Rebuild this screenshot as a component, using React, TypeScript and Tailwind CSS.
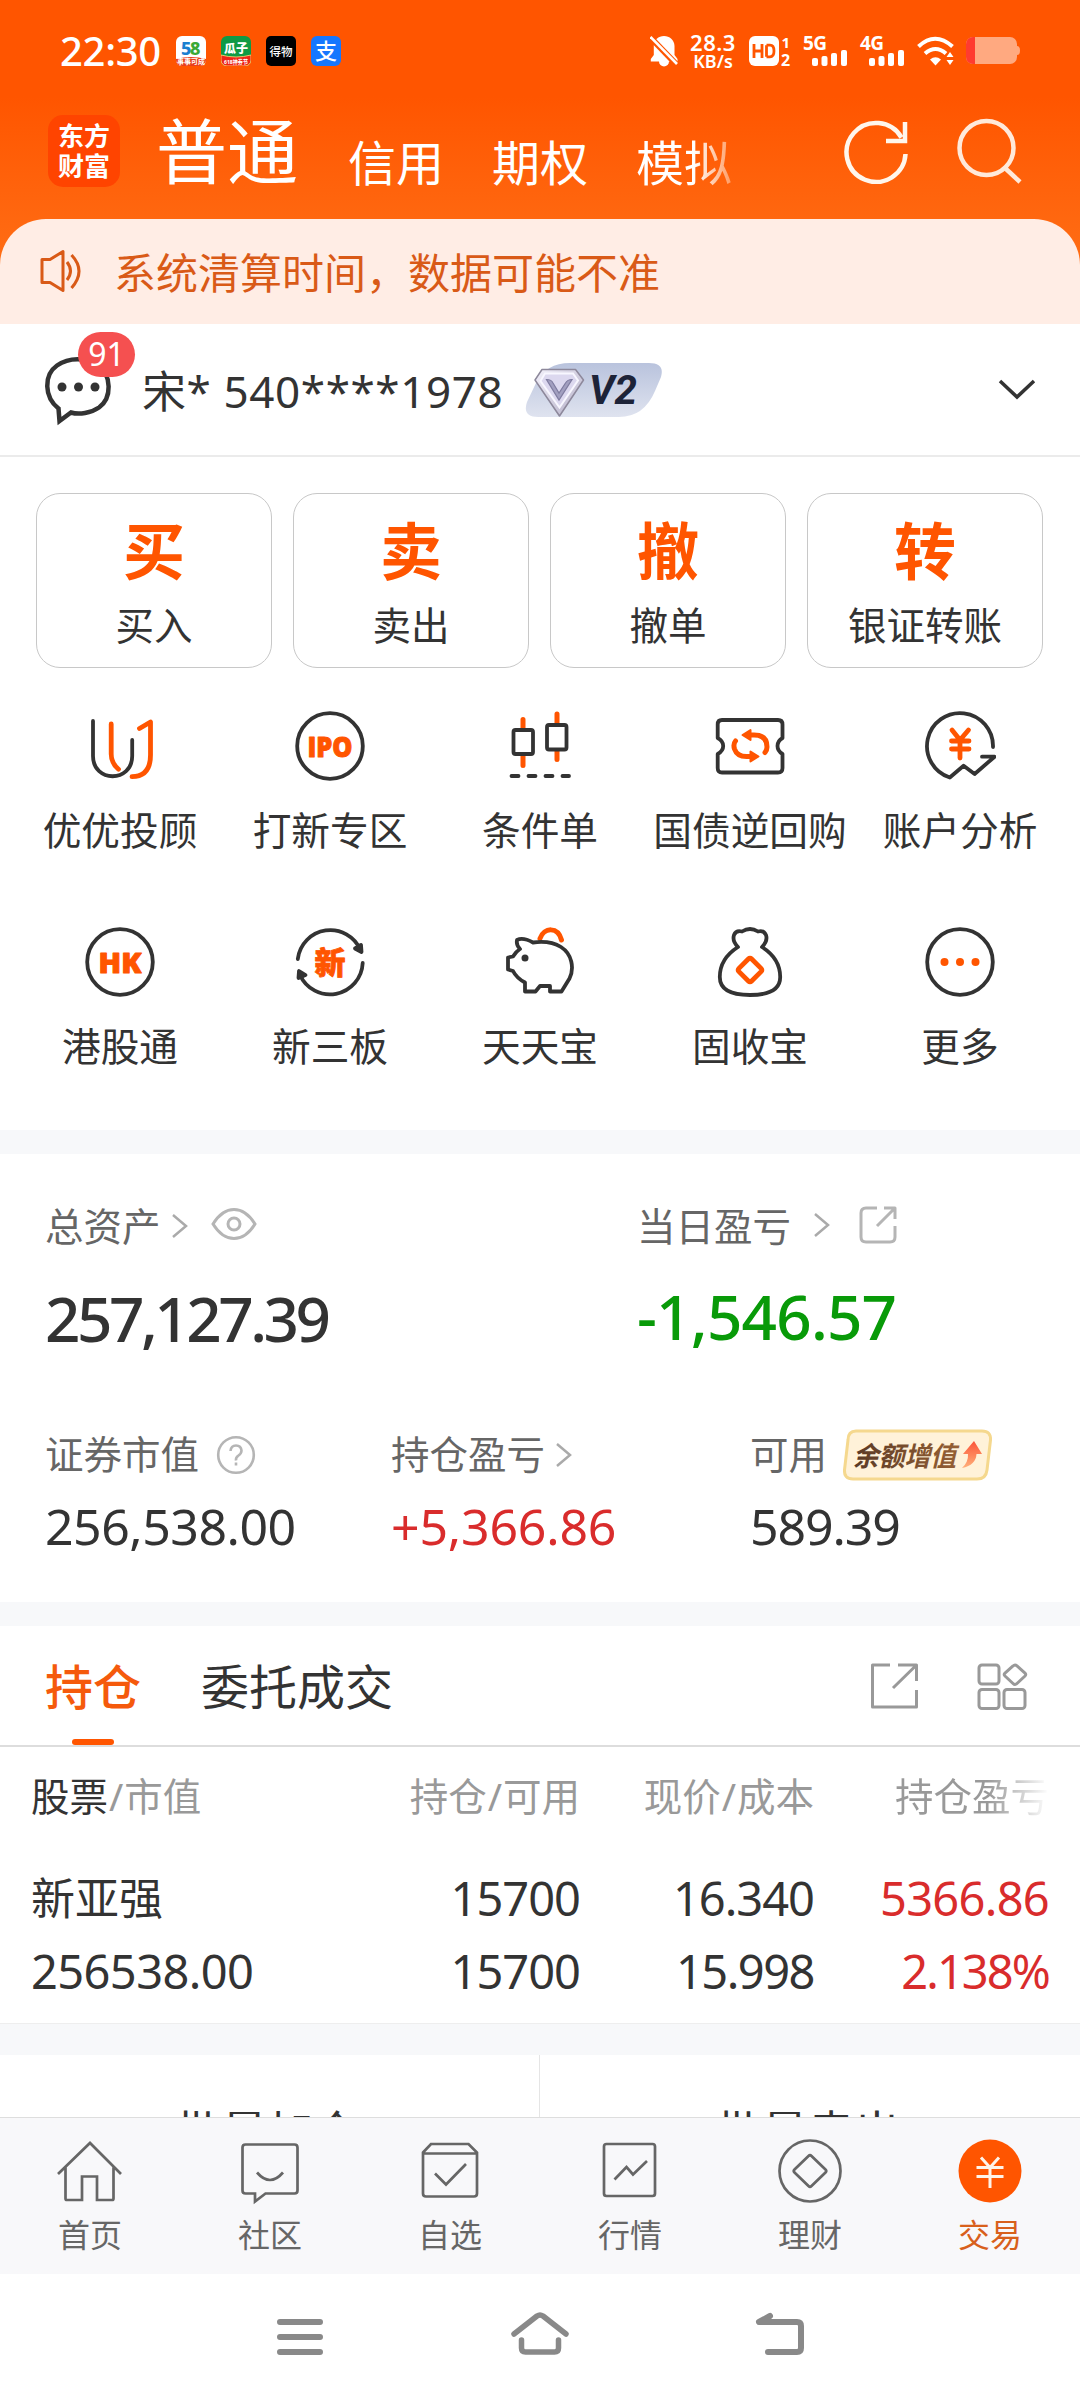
import type { ReactNode } from "react"

const DARK = "#333333"
const ORANGE = "#ff5500"

/* ---------- status bar ---------- */

function SignalBars() {
  return (
    <svg width="36" height="16" viewBox="0 0 36 16" fill="#fff">
      <rect x="0" y="8" width="6" height="8" rx="2" />
      <rect x="9.5" y="6" width="6" height="10" rx="2" />
      <rect x="19" y="3" width="6" height="13" rx="2" />
      <rect x="29" y="0" width="6" height="16" rx="2" />
    </svg>
  )
}

function StatusBar() {
  return (
    <div className="flex h-[102px] items-center pl-[60px] pr-[60px] text-white">
      <span className="w-[116px] text-[40px] font-medium tracking-[-0.3px] leading-[40px]">22:30</span>
      <div className="flex gap-[15px]">
        {/* 58 */}
        <svg width="30" height="30" viewBox="0 0 30 30">
          <rect width="30" height="30" rx="6" fill="#fff" />
          <path d="M0 23q15-4 30 0v1a6 6 0 0 1-6 6H6a6 6 0 0 1-6-6z" fill="#e8401c" />
          <text x="5" y="19" fontSize="18" fontWeight="800" fill="#1a7fd0">5</text>
          <text x="14" y="19" fontSize="18" fontWeight="800" fill="#3aa935">8</text>
          <text x="15" y="28" fontSize="7" fontWeight="700" textAnchor="middle" fill="#fff">事事可成</text>
        </svg>
        <svg width="30" height="30" viewBox="0 0 30 30">
          <rect width="30" height="30" rx="6" fill="#0f9a45" />
          <path d="M0 19q15 4 30 0v5a6 6 0 0 1-6 6H6a6 6 0 0 1-6-6z" fill="#ee2418" stroke="#ffe27a" strokeWidth="0.8" />
          <text x="15" y="17" fontSize="12" fontWeight="800" textAnchor="middle" fill="#fff">瓜子</text>
          <text x="15" y="28" fontSize="6" fontWeight="700" textAnchor="middle" fill="#fff" textLength="24" lengthAdjust="spacingAndGlyphs">618神券节</text>
        </svg>
        <svg width="30" height="30" viewBox="0 0 30 30">
          <rect width="30" height="30" rx="5" fill="#000" />
          <text x="15" y="19.5" fontSize="11.5" fontWeight="500" textAnchor="middle" fill="#fff">得物</text>
        </svg>
        <svg width="30" height="30" viewBox="0 0 30 30">
          <rect width="30" height="30" rx="6" fill="#1677ff" />
          <text x="15" y="23" fontSize="22" fontWeight="500" textAnchor="middle" fill="#fff">支</text>
        </svg>
      </div>

      <div className="ml-auto flex items-center">
        <svg width="28" height="32" viewBox="0 0 28 32">
          <path d="M14 1c5.500 0 10.500 4 10.500 10v9l3 4v2.500H19a5 5 0 0 1-10 0H.8V24l3-4v-9C3.800 5 8.500 1 14 1z" fill="#fff" />
          <path d="M-1 1L27 30" stroke={ORANGE} strokeWidth="6" />
          <path d="M0.500 2L27 29" stroke="#fff" strokeWidth="2.600" />
        </svg>
        <div className="ml-3 flex w-[46px] flex-col items-center font-semibold">
          <span className="text-[22px] leading-[20px] tracking-[0.5px]">28.3</span>
          <span className="text-[18px] leading-[18px]">KB/s</span>
        </div>
        <svg className="ml-[13px]" width="44" height="32" viewBox="0 0 44 32" fill="#fff">
          <rect x="0" y="1" width="30" height="30" rx="6" />
          <path d="M5 9v14M13 9v14M5 16h8M17.500 10.200V21.800M17.500 10.200h3.500q4 0 4 5.800t-4 5.800h-3.500" fill="none" stroke={ORANGE} strokeWidth="2.800" />
          <text x="32.500" y="12.500" fontSize="15" fontWeight="700">1</text>
          <text x="32" y="31" fontSize="16" fontWeight="700">2</text>
        </svg>
        <div className="ml-[10px] flex h-[32px] w-[45px] flex-col">
          <span className="h-[15px] text-[19px] font-bold leading-[16px] tracking-[-0.5px]">5G</span>
          <div className="ml-[9px]"><SignalBars /></div>
        </div>
        <div className="ml-[12px] flex h-[32px] w-[45px] flex-col">
          <span className="h-[15px] text-[19px] font-bold leading-[16px] tracking-[-0.5px]">4G</span>
          <div className="ml-[9px]"><SignalBars /></div>
        </div>
        <svg className="ml-[12px]" width="38" height="32" viewBox="0 0 38 32" fill="none" stroke="#fff" strokeWidth="4">
          <path d="M1.500 11.500Q18 -4 35.500 11.500M8 18.500q10.500-9 21 0" />
          <path d="M13 24.500q5.500-4.500 11 0l-5.500 6z" fill="#fff" stroke="none" />
          <path d="M33 17l3.500 5h-7zM33 30l3.500-5h-7z" fill="#fff" stroke="none" />
        </svg>
        <svg className="ml-[11px]" width="54" height="28" viewBox="0 0 54 28">
          <rect x="0" y="0" width="51" height="27" rx="7" fill="#ffa980" />
          <path d="M51 9q3 0 3 4.500t-3 4.500z" fill="#ffa980" />
          <path d="M9 0H7a7 7 0 0 0-7 7v13a7 7 0 0 0 7 7h2z" fill="#ff3b30" />
        </svg>
      </div>
    </div>
  )
}

/* ---------- top header ---------- */

function Header() {
  return (
    <header className="flex h-[117px] pl-12 text-white">
      <div className="mt-[13px] flex h-[72px] w-[72px] flex-col items-center justify-center rounded-[15px] bg-[#ff4400] text-[26px] font-bold leading-[30px]">
        <span>东方</span>
        <span>财富</span>
      </div>
      <span className="ml-[36px] mt-[13px] w-[192px] text-[71px] leading-[72px]">普通</span>
      <div className="mt-[37px] flex w-[400px] gap-[48px] text-[48px] leading-[48px]">
        <span>信用</span>
        <span>期权</span>
        <span className="bg-gradient-to-r from-white from-60% to-[#ff9a60] bg-clip-text text-transparent">模拟</span>
      </div>
      <svg className="ml-[96px] mt-[16px]" width="66" height="66" viewBox="0 0 66 66" fill="none" stroke="#fff6ec" strokeWidth="4.500">
        <path d="M61.500 36A29.500 29.500 0 1 1 57.500 19.500" />
        <path d="M61 4v19H42" />
      </svg>
      <svg className="ml-[46px] mt-[15px]" width="68" height="68" viewBox="0 0 68 68" fill="none" stroke="#ffe9da" strokeWidth="4.500">
        <circle cx="30.500" cy="31" r="27" />
        <path d="M49 51l15 14" />
      </svg>
    </header>
  )
}

function Notice() {
  return (
    <div className="flex h-[105px] items-center rounded-t-[46px] bg-[#ffede5] pl-[38px] text-[#d95a17]">
      <svg width="48" height="46" viewBox="0 0 48 46" fill="none" stroke="currentColor" strokeWidth="3" className="-mt-[2px]">
        <path d="M4 11.500h8L25 3.500v39L12 34.500H4z" strokeLinejoin="round" />
        <path d="M29 14q7 9 0 18M33.500 7q15 16 0 33" />
      </svg>
      <span className="ml-[28px] mt-[2px] text-[42px] leading-[48px]">系统清算时间，数据可能不准</span>
    </div>
  )
}

function Account() {
  return (
    <div className="flex h-[133px] items-center border-b-2 border-[#ebebeb] pl-[42px] pr-[44px]">
      <div className="relative h-[72px] w-[72px]">
        <svg width="72" height="72" viewBox="0 0 72 72">
          <path d="M16.500 54.500C2 43 1.500 21 15 11.500C27 3 44 3 56 11.500C70 21 70 44 57 53.500C49 59 37 61 29 58.500L17.500 67z" fill="none" stroke={DARK} strokeWidth="4.500" strokeLinejoin="miter" />
          <g fill={DARK}>
            <circle cx="20" cy="33" r="4.500" />
            <circle cx="36.500" cy="33" r="4.500" />
            <circle cx="53" cy="33" r="4.500" />
          </g>
        </svg>
        <span className="absolute -top-[22px] left-[36px] flex h-[45px] w-[57px] items-center justify-center rounded-full bg-[#f55050] text-[32px] leading-none text-white">91</span>
      </div>
      <span className="ml-[28px] mt-[2px] w-[382px] whitespace-nowrap text-[44px] leading-[60px] tracking-[0.600px] text-[#333]">宋* 540****1978</span>
      <svg width="138" height="56" viewBox="0 0 138 56">
        <defs>
          <linearGradient id="vip" x1="0" y1="0" x2="0" y2="1">
            <stop offset="0" stopColor="#b9c3dd" />
            <stop offset="1" stopColor="#dfe3ef" />
          </linearGradient>
          <linearGradient id="gem" x1="0" y1="0" x2="1" y2="1">
            <stop offset="0" stopColor="#f3f1fb" />
            <stop offset="1" stopColor="#b3aec6" />
          </linearGradient>
        </defs>
        <path d="M46 1h79q16 0 12 14l-6 14q-11 26-36 26H14Q-2 55 3 40L12 21Q22 1 46 1z" fill="url(#vip)" />
        <path d="M18 7.500h33.500l8 10.500-24 36L11 18z" fill="url(#gem)" stroke="#8d889b" strokeWidth="1.500" strokeLinejoin="round" />
        <path d="M21 11.500h28l5 7-18.500 27L16.500 19z" fill="#dcd8ef" stroke="#f8f7ff" strokeWidth="2" />
        <path d="M22.500 17.500q5 0 6.500 3.500l6 10 6.500-10q2-3.500 6.500-3.500L35 38z" fill="#a29fc0" stroke="#7f7ca0" strokeWidth="1.200" />
        <text x="65" y="42" fontSize="41" fontWeight="700" fontStyle="italic" fontFamily="Roboto" fill="#1d2338" textLength="48" lengthAdjust="spacingAndGlyphs">V2</text>
      </svg>
      <svg className="ml-auto" width="38" height="22" viewBox="0 0 38 22" fill="none" stroke={DARK} strokeWidth="3.500">
        <path d="M2 2l17 16L36 2" />
      </svg>
    </div>
  )
}

/* ---------- shortcuts ---------- */

const trades = [
  { big: "买", label: "买入" },
  { big: "卖", label: "卖出" },
  { big: "撤", label: "撤单" },
  { big: "转", label: "银证转账" },
]

function TradeButtons() {
  return (
    <div className="grid grid-cols-4 gap-[21px] pl-[36px] pr-[37px] pt-[36px]">
      {trades.map((t) => (
        <div key={t.label} className="flex h-[175px] flex-col items-center rounded-[24px] border-[1.5px] border-[#c8c8c8]">
          <span className="mt-[25px] text-[62px] font-bold leading-[64px] text-[#ff5500]">{t.big}</span>
          <span className="mt-[20px] text-[38.5px] leading-[44px] text-[#333]">{t.label}</span>
        </div>
      ))}
    </div>
  )
}

function Icon72({ children }: { children: ReactNode }) {
  return (
    <svg width="72" height="72" viewBox="0 0 72 72" fill="none" stroke={DARK} strokeWidth="3.800" strokeLinecap="round" strokeLinejoin="round">
      {children}
    </svg>
  )
}

const shortcuts: { label: string; icon: ReactNode }[] = [
  {
    label: "优优投顾",
    icon: (
      <>
        <path d="M9 11v35c0 27 39.200 27 39.200 0V30" />
        <path d="M27.200 14v30q0 9 7.300 15.300M55.500 18.500l11-6.500v33q0 21.500-18.500 21.700" stroke={ORANGE} strokeWidth="4.800" />
      </>
    ),
  },
  {
    label: "打新专区",
    icon: (
      <>
        <circle cx="36" cy="36" r="32.800" />
        <text x="36" y="46.500" fontSize="29" fontWeight="800" fontFamily="Open Sans" textAnchor="middle" fill={ORANGE} stroke={ORANGE} strokeWidth="1" textLength="45" lengthAdjust="spacingAndGlyphs">IPO</text>
      </>
    ),
  },
  {
    label: "条件单",
    icon: (
      <>
        <path d="M19 9.500v9M19 46v9.500M53 4v9M53 41v8.500" stroke={ORANGE} strokeWidth="5" />
        <rect x="9.500" y="20" width="19.500" height="24" rx="2" />
        <rect x="43" y="15" width="19.500" height="24.500" rx="2" />
        <path d="M7.500 66h7M24.500 66h7M41.500 66h7M58.500 66h6.500" />
      </>
    ),
  },
  {
    label: "国债逆回购",
    icon: (
      <>
        <path d="M8 10h56q4.500 0 4.500 4.500V28q-5 3-5 8t5 8v14q0 4.500-4.500 4.500H8Q3.700 62.500 3.700 58V44q5.500-3 5.500-8t-5.500-8V14.500Q3.700 10 8 10z" />
        <path d="M34 25h6q13 0 13 12 0 3-2 5.500M21.500 31Q19 34 20.500 39q2.500 7.500 12 7.500h6" stroke={ORANGE} strokeWidth="5" />
        <path d="M28.500 25l8-5v10zM44.500 46.500l-8-5v10z" fill={ORANGE} stroke={ORANGE} strokeWidth="2" />
      </>
    ),
  },
  {
    label: "账户分析",
    icon: (
      <>
        <path d="M69 37A33 33 0 1 0 25.800 67.500L39.600 55.700 50.600 64l20-17.300H58" />
        <path d="M28 20l8 10 8.500-10M36 30v18M27.500 31h17.500M27.500 39h17.500" stroke={ORANGE} strokeWidth="4.800" />
      </>
    ),
  },
  {
    label: "港股通",
    icon: (
      <>
        <circle cx="36" cy="36" r="32.800" />
        <text x="36" y="46.500" fontSize="29" fontWeight="800" fontFamily="Open Sans" textAnchor="middle" fill={ORANGE} stroke={ORANGE} strokeWidth="1" textLength="43" lengthAdjust="spacingAndGlyphs">HK</text>
      </>
    ),
  },
  {
    label: "新三板",
    icon: (
      <>
        <path d="M3.800 33A32.800 32.800 0 0 1 66.500 24M68.700 37A32.800 32.800 0 0 1 6 49" />
        <path d="M67.500 26l-6.500-3.500 6-3.500zM5 45l-.5 7 7-3z" fill={DARK} />
        <text x="36" y="47.500" fontSize="31" fontWeight="800" textAnchor="middle" fill={ORANGE} stroke={ORANGE} strokeWidth="0.800">新</text>
      </>
    ),
  },
  {
    label: "天天宝",
    icon: (
      <>
        <path d="M36 12.500C40 1 54 0.500 57.500 14" stroke={ORANGE} strokeWidth="5" />
        <path d="M13 14q6-3 16 2.500c12-1.500 20-.5 28 4.500 11 7 13.500 21 8.500 31.500L57.500 65.500H46V60H36l-4.500 5.500H21V56.500Q12.500 52 9 45L4 43.500v-12L9 30.500Q12 25.500 16 23q-4-4-3-9z" />
        <circle cx="21" cy="32" r="3.500" fill={DARK} stroke="none" />
      </>
    ),
  },
  {
    label: "固收宝",
    icon: (
      <>
        <path d="M24 21C13 28 5.800 38 5.800 51 5.800 64 18 69 36 69s30.200-5 30.200-18C66.200 38 59 28 48 21q6-6 4-12-2.500-5-8-3.500Q40 3 36 3t-8 2.500Q22 4 20 9q-2 6 4 12z" />
        <rect x="27" y="35" width="18" height="18" rx="2" transform="rotate(45 36 44)" stroke={ORANGE} strokeWidth="4.800" />
      </>
    ),
  },
  {
    label: "更多",
    icon: (
      <>
        <circle cx="36" cy="36" r="32.800" />
        <g fill={ORANGE} stroke="none">
          <circle cx="20.500" cy="36" r="4" />
          <circle cx="36" cy="36" r="4" />
          <circle cx="51.500" cy="36" r="4" />
        </g>
      </>
    ),
  },
]

function Shortcuts() {
  return (
    <div className="grid h-[462px] grid-cols-5 grid-rows-[216px_216px] px-[15px] pt-[42px]">
      {shortcuts.map((s) => (
        <div key={s.label} className="flex flex-col items-center">
          <Icon72>{s.icon}</Icon72>
          <span className="mt-[26px] whitespace-nowrap text-[38.7px] leading-[44px] text-[#333]">{s.label}</span>
        </div>
      ))}
    </div>
  )
}

/* ---------- assets ---------- */

function Chevron({ className }: { className?: string }) {
  return (
    <svg className={className} width="18" height="26" viewBox="0 0 18 26" fill="none" stroke="#aaaaaa" strokeWidth="2.500">
      <path d="M2 2l13 11L2 24" />
    </svg>
  )
}

function Assets() {
  return (
    <section className="h-[448px] px-[45px] pt-[50px]">
      <div className="flex">
        <div className="w-[592px]">
          <div className="flex h-[44px] items-center text-[38.5px] leading-[44px] text-[#666]">
            <span>总资产</span>
            <Chevron className="ml-[10px]" />
            <svg className="-mt-[4px] ml-[21px]" width="48" height="34" viewBox="0 0 48 34" fill="none" stroke="#b5b5b5" strokeWidth="3">
              <path d="M3 17Q12 2.500 24 2.500T45 17Q36 31.500 24 31.500T3 17z" />
              <circle cx="24" cy="17" r="6" />
            </svg>
          </div>
          <div className="mt-[35px] text-[62px] font-medium leading-[70px] tracking-[-3.500px] text-[#333]">257,127.39</div>
        </div>
        <div>
          <div className="flex h-[44px] items-center text-[38.5px] leading-[44px] text-[#666]">
            <span>当日盈亏</span>
            <Chevron className="-mt-[3px] ml-[22px]" />
            <svg className="-mt-[3px] ml-[27px]" width="40" height="40" viewBox="0 0 40 40" fill="none" stroke="#b5b5b5" strokeWidth="3" strokeLinejoin="round">
              <path d="M19 3H8Q3 3 3 8v24q0 5 5 5h24q5 0 5-5V21M26 3h11v11M37 3L19 21" />
            </svg>
          </div>
          <div className="mt-[33px] text-[62px] font-medium leading-[70px] tracking-[-0.800px] text-[#089a08]">-1,546.57</div>
        </div>
      </div>

      <div className="mt-[76px] flex">
        <div className="w-[346px]">
          <div className="flex h-[52px] items-center text-[38.5px] leading-[44px] text-[#666]">
            <span className="-mt-[2px]">证券市值</span>
            <svg className="ml-[17px]" width="40" height="40" viewBox="0 0 40 40" fill="none" stroke="#b5b5b5" strokeWidth="2.600">
              <circle cx="20" cy="20" r="17.800" />
              <path d="M14.500 16q.5-5.500 5.500-5.500t5.500 5q0 3-3 5t-2.500 5" />
              <circle cx="20" cy="29" r="1" fill="#b5b5b5" stroke="none" />
              <path d="M20 27.500v3" />
            </svg>
          </div>
          <div className="mt-[15px] text-[50px] leading-[60px] tracking-[-0.500px] text-[#333]">256,538.00</div>
        </div>
        <div className="w-[359px]">
          <div className="flex h-[52px] items-center text-[38.5px] leading-[44px] text-[#666]">
            <span className="-mt-[2px]">持仓盈亏</span>
            <Chevron className="-mt-px ml-[10px]" />
          </div>
          <div className="mt-[15px] text-[50px] leading-[60px] tracking-[-0.200px] text-[#d92c2c]">+5,366.86</div>
        </div>
        <div>
          <div className="flex h-[52px] items-center text-[38.5px] leading-[44px] text-[#666]">
            <span className="-mt-[2px]">可用</span>
            <svg className="ml-[15px]" width="151" height="52" viewBox="0 0 151 52">
              <defs>
                <linearGradient id="brown" x1="0" y1="0" x2="1" y2="0">
                  <stop offset="0" stopColor="#5a3a25" />
                  <stop offset="1" stopColor="#966035" />
                </linearGradient>
                <linearGradient id="rise" x1="0" y1="0" x2="0" y2="1">
                  <stop offset="0" stopColor="#fb5438" />
                  <stop offset="1" stopColor="#ffb07a" />
                </linearGradient>
              </defs>
              <path d="M14 2h126q9 0 8.500 9l-3.500 30q-1 9-10 9H11q-9 0-8.500-9L6 11Q6 2 14 2z" fill="#fff2d9" stroke="#f5d88e" strokeWidth="3" />
              <text x="11" y="36.500" fontSize="27" fontWeight="700" fontStyle="italic" fill="url(#brown)" textLength="103" lengthAdjust="spacingAndGlyphs">余额增值</text>
              <path d="M132 12l8 13h-5.500q-.5 11-14.500 14 6.500-6 6-14H121z" fill="url(#rise)" />
            </svg>
          </div>
          <div className="mt-[15px] text-[50px] leading-[60px] tracking-[-1.100px] text-[#333]">589.39</div>
        </div>
      </div>
    </section>
  )
}

/* ---------- positions ---------- */

function Positions() {
  return (
    <section>
      <div className="flex h-[121px] border-b-2 border-[#dddddd] pl-[45px] pr-[50px] text-[48px] leading-[52px]">
        <div className="flex w-[96px] flex-col items-center whitespace-nowrap text-[#f55a0c]">
          <span className="mt-[35px] font-medium">持仓</span>
          <span className="mt-auto h-[6px] w-[42px] rounded-full bg-[#ff5500]" />
        </div>
        <span className="ml-[60px] mt-[35px] text-[#333]">委托成交</span>
        <svg className="ml-auto mt-[36px]" width="48" height="48" viewBox="0 0 48 48" fill="none" stroke="#999" strokeWidth="3">
          <path d="M20 3H2.500v42h44V28M28 3h18.500v16M46 3.500L23 26" strokeLinejoin="round" />
        </svg>
        <svg className="ml-[58px] mt-[36px]" width="54" height="50" viewBox="0 0 54 50" fill="none" stroke="#999" strokeWidth="3">
          <rect x="3" y="3" width="20" height="19" rx="3" />
          <rect x="3" y="27.500" width="20" height="19" rx="3" />
          <rect x="28" y="27.500" width="21" height="19" rx="3" />
          <path d="M37 4q2-2 4 0l8 7q1.500 1.500 0 3l-8 7.500q-2 2-4 0L29 14q-1.500-1.500 0-3z" />
        </svg>
      </div>

      <div className="grid h-[276px] grid-cols-[290px_259px_234px_235px] content-start pl-[31px] pt-[25px]">
        <div className="text-[38.5px] leading-[48px] text-[#999]">
          <span className="text-[#333]">股票</span><span className="mx-[1px]">/</span>市值
        </div>
        <div className="text-right text-[38.500px] leading-[48px] text-[#999]">持仓<span className="mx-[1px]">/</span>可用</div>
        <div className="text-right text-[38.500px] leading-[48px] text-[#999]">现价<span className="mx-[1px]">/</span>成本</div>
        <div className="flex justify-end text-[38.500px] leading-[48px]">
          <span className="bg-gradient-to-r from-[#999] from-60% to-white bg-clip-text text-transparent">持仓盈亏</span>
        </div>

        <div className="mt-[48px] text-[44px] leading-[60px] text-[#333]">新亚强</div>
        <div className="mt-[48px] text-right text-[47px] leading-[60px] tracking-[-1px] text-[#333]">15700</div>
        <div className="mt-[48px] text-right text-[47px] leading-[60px] tracking-[-1px] text-[#333]">16.340</div>
        <div className="mt-[48px] text-right text-[47px] leading-[60px] tracking-[-0.700px] text-[#d92c2c]">5366.86</div>

        <div className="mt-[13px] text-[47px] leading-[60px] tracking-[-0.600px] text-[#333]">256538.00</div>
        <div className="mt-[13px] text-right text-[47px] leading-[60px] tracking-[-1px] text-[#333]">15700</div>
        <div className="mt-[13px] text-right text-[47px] leading-[60px] tracking-[-1.500px] text-[#333]">15.998</div>
        <div className="mt-[13px] text-right text-[47px] leading-[60px] tracking-[-1.900px] text-[#d92c2c]">2.138%</div>
      </div>
    </section>
  )
}

/* ---------- bottom bars ---------- */

const tabs: { label: string; active?: boolean; icon: ReactNode }[] = [
  {
    label: "首页",
    icon: <path d="M4 35L36 4l31 31M11.500 28.500V59.500q0 1.500 1.500 1.500h15V37.500h15V61h15q1.500 0 1.500-1.500V28.500" />,
  },
  {
    label: "社区",
    icon: (
      <>
        <path d="M11.500 5.500h49q3 0 3 3v43q0 3-3 3H31.500L21 62.500v-8H11.500q-3 0-3-3v-43q0-3 3-3z" />
        <path d="M23 33.500q13 15 26 0" />
      </>
    ),
  },
  {
    label: "自选",
    icon: (
      <>
        <path d="M9 13.500L17 5h37.500L63 13.500V54.500q0 3-3 3H12q-3 0-3-3zM9 14.500h54" />
        <path d="M21 34.500l11 11 20-20.500" />
      </>
    ),
  },
  {
    label: "行情",
    icon: (
      <>
        <rect x="10" y="5" width="51" height="52" rx="2.500" />
        <path d="M20.500 40.500l12-12.500 6.500 7.500L53 22" />
      </>
    ),
  },
  {
    label: "理财",
    icon: (
      <>
        <circle cx="36" cy="32" r="30.500" />
        <path d="M34.500 17q1.500-1.500 3 0L51.500 30.500q1.500 1.500 0 3L37.500 47q-1.500 1.500-3 0L20.500 33.500q-1.500-1.500 0-3z" />
      </>
    ),
  },
  {
    label: "交易",
    active: true,
    icon: (
      <>
        <circle cx="36" cy="32" r="31.500" fill={ORANGE} stroke="none" />
        <path d="M27 18.500l9 10 9-10M36 28.500V49M22.500 28.500h27M22.500 37.500h27" stroke="#fff3e8" strokeWidth="3" />
      </>
    ),
  },
]

function TabBar() {
  return (
    <nav className="grid h-[157px] grid-cols-6 border-t border-[#dedede] bg-[#f8f8fa]">
      {tabs.map((t) => (
        <div key={t.label} className="flex flex-col items-center pt-[21px]">
          <svg width="72" height="66" viewBox="0 0 72 66" fill="none" stroke="#666" strokeWidth="2.700">
            {t.icon}
          </svg>
          <span className={t.active ? "mt-[10px] text-[32px] leading-[40px] text-[#d8601c]" : "mt-[10px] text-[32px] leading-[40px] text-[#666]"}>
            {t.label}
          </span>
        </div>
      ))}
    </nav>
  )
}

function SystemNav() {
  return (
    <div className="flex h-[126px] justify-center gap-[180px] bg-white pt-[33px]">
      <svg width="60" height="56" viewBox="0 0 60 56" fill="none" stroke="#898989" strokeWidth="6" strokeLinecap="round">
        <path d="M10 15h40M10 30h40M10 45h40" />
      </svg>
      <svg width="60" height="56" viewBox="0 0 60 56" fill="none" stroke="#898989" strokeWidth="5.500" strokeLinecap="round" strokeLinejoin="round">
        <path d="M4 27L27 9q3-2 6 0L56 27M11.500 33v8q0 4 4 4h29q4 0 4-4v-8" />
      </svg>
      <svg width="60" height="56" viewBox="0 0 60 56" fill="none" stroke="#898989" strokeWidth="6" strokeLinecap="round" strokeLinejoin="round">
        <path d="M20 9L9 15h38q4 0 4 4v22q0 4-4 4H18" />
      </svg>
    </div>
  )
}

export default function App() {
  return (
    <div className="flex h-[2400px] w-[1080px] flex-col overflow-hidden bg-white font-['Noto_Sans','Noto_Sans_CJK_SC',sans-serif]">
      <div className="bg-gradient-to-b from-[#ff5500] from-30% to-[#ff7519]">
        <StatusBar />
        <Header />
        <Notice />
      </div>
      <Account />
      <TradeButtons />
      <Shortcuts />
      <div className="h-6 bg-[#f7f8fa]" />
      <Assets />
      <div className="h-6 bg-[#f7f8fa]" />
      <Positions />
      <div className="h-8 border-t border-[#eeeeee] bg-[#f7f8fa]" />
      <div className="flex h-[62px] overflow-hidden text-center text-[46px] leading-[60px] text-[#333]">
        <div className="w-[540px] border-r border-[#e5e5e5] pt-[46px] pr-[4px]">批量加仓</div>
        <div className="w-[540px] pt-[46px] pr-[4px]">批量卖出</div>
      </div>
      <TabBar />
      <SystemNav />
    </div>
  )
}
